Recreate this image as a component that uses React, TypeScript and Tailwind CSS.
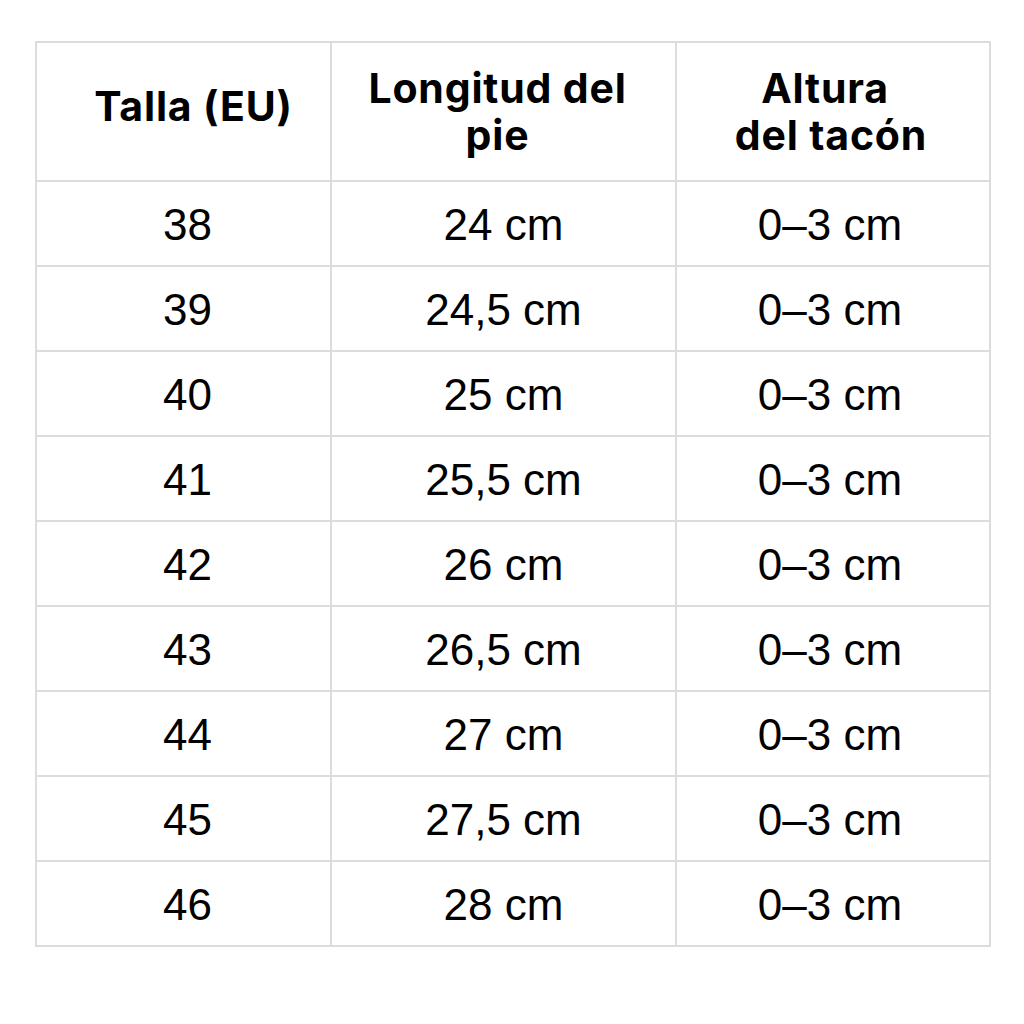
import React from "react";

const rows: [string, string][] = [
  ["38", "24 cm"],
  ["39", "24,5 cm"],
  ["40", "25 cm"],
  ["41", "25,5 cm"],
  ["42", "26 cm"],
  ["43", "26,5 cm"],
  ["44", "27 cm"],
  ["45", "27,5 cm"],
  ["46", "28 cm"],
];

const App: React.FC = () => {
  return (
    <div className="w-[1024px] h-[1024px] bg-white pt-[41px] pl-[35px]">
      <table className="border-collapse text-black table-fixed w-[954px]">
        <colgroup>
          <col className="w-[295px]" />
          <col className="w-[345px]" />
          <col className="w-[314px]" />
        </colgroup>
        <thead>
          <tr className="h-[139px] font-['Inter',sans-serif] font-semibold text-[41px] leading-[47px] tracking-[0.02em]">
            <th className="border-2 border-[#dcdcdc] text-center align-middle pb-[10px] pl-[20px]">Talla (EU)</th>
            <th className="border-2 border-[#dcdcdc] text-center align-middle pr-[12px]">
              Longitud del
              <br />
              pie
            </th>
            <th className="border-2 border-[#dcdcdc] text-center align-middle pr-[4px]">
              <span className="pr-[12px]">Altura</span>
              <br />
              del tacón
            </th>
          </tr>
        </thead>
        <tbody className="font-['Liberation_Sans',Arial,sans-serif] text-[44px]">
          {rows.map(([size, len]) => (
            <tr key={size} className="h-[85px]">
              <td className="border-2 border-[#dcdcdc] text-center align-middle pt-[2px] pl-[8px]">{size}</td>
              <td className="border-2 border-[#dcdcdc] text-center align-middle pt-[2px]">{len}</td>
              <td className="border-2 border-[#dcdcdc] text-center align-middle pt-[2px] pr-[6px]">0–3 cm</td>
            </tr>
          ))}
        </tbody>
      </table>
    </div>
  );
};

export default App;
